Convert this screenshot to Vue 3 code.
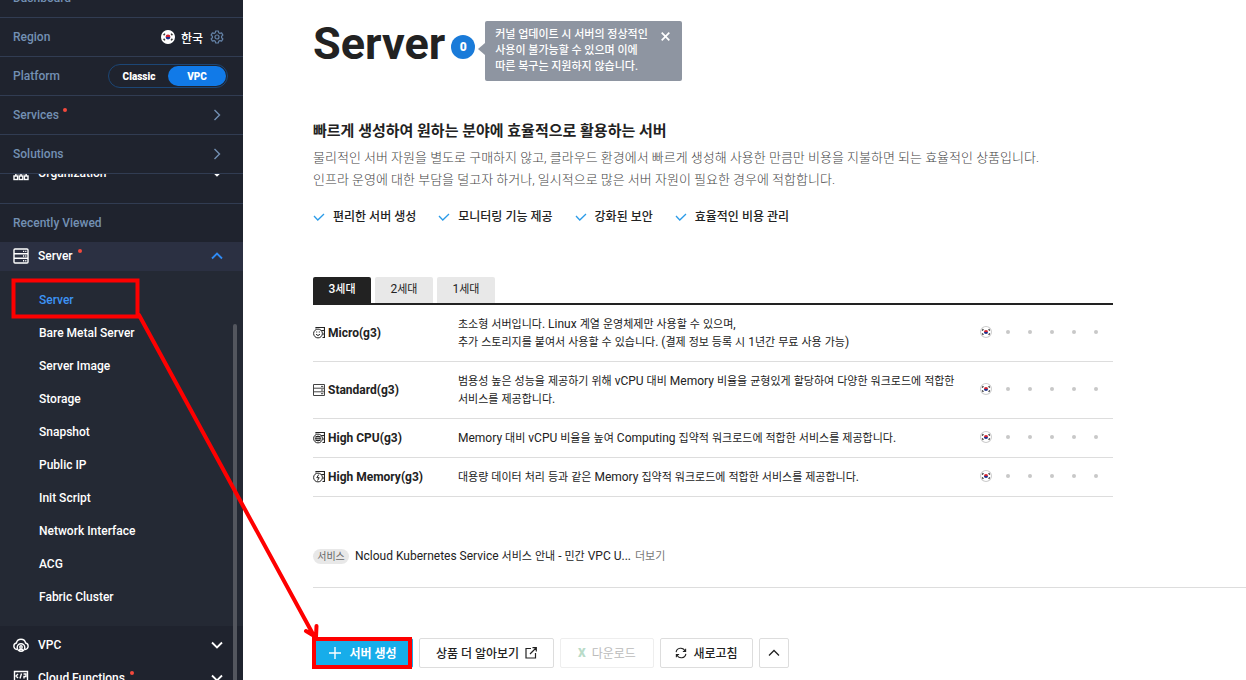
<script setup>
import { h, ref } from 'vue'

const subMenu = ['Server', 'Bare Metal Server', 'Server Image', 'Storage', 'Snapshot', 'Public IP', 'Init Script', 'Network Interface', 'ACG', 'Fabric Cluster']
const features = ['편리한 서버 생성', '모니터링 기능 제공', '강화된 보안', '효율적인 비용 관리']
const tabs = ['3세대', '2세대', '1세대']
const activeTab = ref('3세대')
const rows = [
  { icon: 'micro', name: 'Micro(g3)', lines: ['초소형 서버입니다. Linux 계열 운영체제만 사용할 수 있으며,', '추가 스토리지를 붙여서 사용할 수 있습니다. (결제 정보 등록 시 1년간 무료 사용 가능)'] },
  { icon: 'standard', name: 'Standard(g3)', lines: ['범용성 높은 성능을 제공하기 위해 vCPU 대비 Memory 비율을 균형있게 할당하여 다양한 워크로드에 적합한 서비스를 제공합니다.'] },
  { icon: 'cpu', name: 'High CPU(g3)', lines: ['Memory 대비 vCPU 비율을 높여 Computing 집약적 워크로드에 적합한 서비스를 제공합니다.'] },
  { icon: 'memory', name: 'High Memory(g3)', lines: ['대용량 데이터 처리 등과 같은 Memory 집약적 워크로드에 적합한 서비스를 제공합니다.'] },
]

// Sets Hangul one step smaller than the Latin text beside it.
const MixedText = ({ text }) =>
  text.split(/([가-힣]+)/).map((run, i) => (i % 2 ? h('small', run) : run))
MixedText.props = ['text']
</script>

<template>
  <svg class="defs" aria-hidden="true">
    <symbol id="korea" viewBox="0 0 14 14">
      <circle cx="7" cy="7" r="6.400" fill="#fff" stroke="currentColor" stroke-width="1.200" />
      <path d="M4.600 7a2.400 2.400 0 0 1 4.800 0z" fill="#d3222f" />
      <path d="M4.600 7a2.400 2.400 0 0 0 4.800 0z" fill="#21308c" />
      <path d="M2.600 5.300l1.300-1.700M10.100 3.600l1.300 1.700M2.600 8.700l1.300 1.700M10.100 10.400l1.300-1.700" stroke="#333" stroke-width="1.500" />
    </symbol>
    <symbol id="down" viewBox="0 0 12 8"><path d="M1 1.500l5 5 5-5" fill="none" stroke="currentColor" stroke-width="1.800" /></symbol>
    <symbol id="right" viewBox="0 0 8 12"><path d="M1.500 1l5 5-5 5" fill="none" stroke="currentColor" stroke-width="1.400" /></symbol>
    <symbol id="rack" viewBox="0 0 16 16">
      <g fill="none" stroke="currentColor" stroke-width="1.400">
        <rect x="1" y="1" width="14" height="14" rx="1" /><path d="M1 5.700h14M1 10.300h14" />
      </g>
      <path d="M10 3.400h3.400M10 8h3.400M10 12.700h3.400" stroke="currentColor" stroke-width="1.400" stroke-dasharray="1.200 1" />
    </symbol>
  </svg>

  <div class="page">
    <aside class="sidebar">
      <div class="fixed-menu">
        <div class="row"><a href="#">Dashboard</a></div>
        <div class="row">
          <span>Region</span>
          <span class="region">
            <svg class="flag-lg"><use href="#korea" /></svg>
            <span class="country">한국</span>
            <button class="bare" aria-label="Region settings">
              <svg width="14" height="14" viewBox="0 0 14 14" fill="none" stroke="#6482a6" stroke-width="1.200">
                <path d="M5.700 1h2.600l.4 1.700 1.200.7 1.700-.5 1.300 2.200L11.600 6.300v1.400l1.300 1.200-1.300 2.200-1.700-.5-1.200.7L8.300 13H5.700l-.4-1.700-1.200-.7-1.700.5-1.300-2.200 1.300-1.200V6.300L1.100 5.100l1.300-2.200 1.700.5 1.200-.7z" stroke-linejoin="round" />
                <circle cx="7" cy="7" r="2" />
              </svg>
            </button>
          </span>
        </div>
        <div class="row">
          <span>Platform</span>
          <span class="toggle">
            <button>Classic</button>
            <button class="on">VPC</button>
          </span>
        </div>
        <div class="row"><a href="#" class="label">Services<i class="dot"></i></a><svg class="chev-right"><use href="#right" /></svg></div>
        <div class="row"><a href="#">Solutions</a><svg class="chev-right"><use href="#right" /></svg></div>
      </div>

      <div class="scroll-menu">
        <a href="#" class="item organization">
          <svg class="item-icon" viewBox="0 0 16 16" fill="none" stroke="currentColor" stroke-width="1.400">
            <rect x="5.500" y="1" width="5" height="4" /><path d="M8 5v4M2.800 11V8.500h10.400V11M8 8v3" />
            <rect x="1" y="11" width="3.600" height="3.500" /><rect x="6.200" y="11" width="3.600" height="3.500" /><rect x="11.400" y="11" width="3.600" height="3.500" />
          </svg>
          <span>Organization</span><svg class="chev"><use href="#down" /></svg>
        </a>
        <h2>Recently Viewed</h2>
        <a href="#" class="item open">
          <svg class="item-icon"><use href="#rack" /></svg>
          <span class="label">Server<i class="dot"></i></span><svg class="chev up"><use href="#down" /></svg>
        </a>
        <ul>
          <li v-for="(s, i) in subMenu" :key="s"><a href="#" :class="{ current: i === 0 }">{{ s }}</a></li>
        </ul>
        <a href="#" class="item">
          <svg class="item-icon" viewBox="0 0 16 16" fill="none" stroke="currentColor" stroke-width="1.400">
            <path d="M4 12.500a3.300 3.300 0 0 1-.6-6.500 4.700 4.700 0 0 1 9.200 0 3.300 3.300 0 0 1-.6 6.500" />
            <circle cx="8" cy="10.500" r="3.800" /><circle cx="8" cy="10" r="1.200" /><path d="M6.500 14v-1.500h3V14" />
          </svg>
          <span>VPC</span><svg class="chev"><use href="#down" /></svg>
        </a>
        <a href="#" class="item">
          <svg class="item-icon" viewBox="0 0 16 16" fill="none" stroke="currentColor" stroke-width="1.400">
            <path d="M1.500 1.500h13v13h-13z" /><path d="M5 4L3 6l2 2M8.500 3.500l-1.500 5M10.500 4h2.500v2.500h-2v2M5 14v-2.500h5" />
          </svg>
          <span class="label">Cloud Functions<i class="dot"></i></span><svg class="chev"><use href="#down" /></svg>
        </a>
      </div>
      <div class="scrollbar"></div>
    </aside>

    <main>
      <header>
        <h1>Server</h1>
        <span class="count">0</span>
        <div class="tip">
          <p>커널 업데이트 시 서버의 정상적인<br />사용이 불가능할 수 있으며 이에<br />따른 복구는 지원하지 않습니다.</p>
          <button class="bare" aria-label="닫기">
            <svg width="9" height="9" viewBox="0 0 9 9" stroke="#fff" stroke-width="1.700"><path d="M.7.7l7.600 7.600M8.300.7L.7 8.300" /></svg>
          </button>
        </div>
      </header>

      <h3>빠르게 생성하여 원하는 분야에 효율적으로 활용하는 서버</h3>
      <p class="intro">물리적인 서버 자원을 별도로 구매하지 않고, 클라우드 환경에서 빠르게 생성해 사용한 만큼만 비용을 지불하면 되는 효율적인 상품입니다.<br />인프라 운영에 대한 부담을 덜고자 하거나, 일시적으로 많은 서버 자원이 필요한 경우에 적합합니다.</p>
      <ul class="features">
        <li v-for="f in features" :key="f">
          <svg width="12" height="8" viewBox="0 0 12 8" fill="none" stroke="#2b9be8" stroke-width="1.300"><path d="M1 3l3.800 4L11 1" /></svg>{{ f }}
        </li>
      </ul>

      <div class="tabs" role="tablist">
        <button v-for="t in tabs" :key="t" role="tab" :class="{ active: t === activeTab }" @click="activeTab = t"><MixedText :text="t" /></button>
      </div>
      <table>
        <tbody>
          <tr v-for="r in rows" :key="r.name">
            <th scope="row">
              <div class="name">
                <svg v-if="r.icon === 'standard'" class="type-icon" viewBox="0 0 12 12" fill="none" stroke="#444">
                  <path d="M.5.500h11v11H.5zM.5 4.200h11M.5 7.800h11M8 2.400h2.300M8 6h2.300M8 9.700h2.300" />
                </svg>
                <svg v-else class="type-icon" viewBox="0 0 12 12" fill="none" stroke="#222">
                  <path d="M3 1.500V.5h8.500v10H9.500M8 3.500h3.500M9.500 7h2" stroke-width="1.200" />
                  <circle cx="5" cy="6.500" r="4.400" fill="#fff" />
                  <template v-if="r.icon === 'micro'">
                    <path d="M3 7.300q2 2.400 4 0" /><path d="M3.200 5h1M5.800 5h1" stroke-width="1.200" />
                  </template>
                  <template v-else-if="r.icon === 'cpu'">
                    <rect x="3" y="4.500" width="4" height="4" /><path d="M5 3.300v6.400M1.800 6.500h6.400" stroke-width=".7" />
                  </template>
                  <path v-else d="M5.800 3.500L3.800 6.700h2.400L4.500 9.500" />
                </svg>
                {{ r.name }}
              </div>
            </th>
            <td><template v-for="(l, i) in r.lines" :key="l"><br v-if="i" /><MixedText :text="l" /></template></td>
            <td class="regions">
              <div>
                <span><svg class="flag-sm"><use href="#korea" /></svg></span>
                <span v-for="n in 5" :key="n"><i></i></span>
              </div>
            </td>
          </tr>
        </tbody>
      </table>

      <div class="notice">
        <span class="badge">서비스</span>
        <a href="#"><MixedText text="Ncloud Kubernetes Service 서비스 안내 - 민간 VPC U..." /></a>
        <a href="#" class="more"><MixedText text="더보기" /></a>
      </div>

      <div class="actions">
        <button class="primary">
          <svg width="12" height="12" viewBox="0 0 12 12" stroke="#fff" stroke-width="1.400"><path d="M6 0v12M0 6h12" /></svg><span>서버 생성</span>
        </button>
        <button class="learn"><span>상품 더 알아보기</span>
          <svg width="12" height="12" viewBox="0 0 12 12" fill="none" stroke="#222" stroke-width="1.200"><path d="M6 1.500H1v9.500h9.500V6M7.500.7h3.800v3.800M11 1L5 7" /></svg>
        </button>
        <button class="download" disabled><b>X</b><span>다운로드</span></button>
        <button class="refresh">
          <svg width="12" height="12" viewBox="0 0 13 12" fill="none" stroke="#222" stroke-width="1.200"><path d="M1.200 5a5 5 0 0 1 9.600-1M11.800 7a5 5 0 0 1-9.600 1M11.500 1.300V4.300H8.500M1.500 10.700V7.700h3" /></svg><span>새로고침</span>
        </button>
        <button class="collapse" aria-label="접기"><svg class="chev-thin" viewBox="0 0 12 8" fill="none" stroke="#222" stroke-width="1.300"><path d="M1 6.500l5-5 5 5" /></svg></button>
      </div>
    </main>

    <svg class="annotation" width="420" height="680" viewBox="0 0 420 680" fill="none" stroke="#fe0000" stroke-width="4" aria-hidden="true">
      <rect x="13.500" y="280.500" width="124" height="36" />
      <rect x="314" y="639" width="96" height="28" />
      <path d="M139 315L314 636M306 631L316 637L316.500 626" stroke-linecap="round" />
    </svg>
  </div>
</template>

<style>
body {
  margin: 0;
  overflow: hidden;
}
</style>

<style scoped>
.page, .page * { box-sizing: border-box; }
.page {
  position: relative;
  display: flex;
  height: 100vh;
  overflow: hidden;
  background: #fff;
  color: #222;
  font-family: Roboto, "Noto Sans CJK KR", sans-serif;
  font-size: 12px;
}
.page ul, .page p, .page h1, .page h2, .page h3 { margin: 0; padding: 0; list-style: none; }
.page :deep(small) { font-size: 11px; line-height: 0; }
a { color: inherit; text-decoration: none; }
button { font: inherit; color: inherit; cursor: pointer; padding: 0; }
svg { flex: none; }
.defs { position: absolute; width: 0; height: 0; }
.bare { display: flex; border: 0; background: none; }

.sidebar {
  position: relative;
  flex: none;
  display: flex;
  flex-direction: column;
  width: 243px;
  background: #1f232e;
  color: #fff;
}
.fixed-menu { flex: none; margin-top: -21px; }
.row {
  display: flex;
  align-items: center;
  justify-content: space-between;
  height: 39px;
  padding: 0 15px 0 13px;
  border-bottom: 1px solid #313c52;
  color: #7390b3;
  font-weight: 500;
}
.region { display: flex; align-items: center; padding-right: 4px; color: #fff; }
.country { margin: 0 7px 0 6px; }
.flag-lg { width: 14px; height: 14px; }
.toggle {
  display: flex;
  width: 120px;
  height: 24px;
  padding: 1px;
  border: 1px solid #1c4675;
  border-radius: 12px;
  color: #fff;
  font-size: 10px;
  font-weight: 900;
}
.toggle button { flex: 1; border: 0; border-radius: 10px; background: none; }
.toggle .on { background: #117ae8; }
.chev-right { width: 8px; height: 12px; margin-right: 7px; }
.label { display: flex; line-height: 14px; }
.dot {
  width: 4px;
  height: 4px;
  margin-left: 4px;
  border-radius: 50%;
  background: #f4483c;
}
.scroll-menu { flex: 1; min-height: 0; overflow: hidden; }
.item {
  display: flex;
  align-items: center;
  height: 33px;
  padding: 4px 20px 0 13px;
  font-weight: 500;
}
.item .dot { margin-left: 5px; }
.item-icon { width: 16px; height: 16px; margin-right: 9px; }
.item .chev { margin-left: auto; }
.chev { width: 12px; height: 8px; }
.organization { margin-top: -18px; padding-top: 0; }
.page .scroll-menu h2 {
  height: 39px;
  margin-top: 14px;
  padding-left: 13px;
  border-top: 1px solid #313c52;
  color: #7390b3;
  font-size: 12px;
  font-weight: 500;
  line-height: 38px;
}
.open { height: 29px; padding-top: 0; padding-bottom: 2px; background: #2b3042; }
.up { transform: rotate(180deg); color: #2f8bf5; }
.page .scroll-menu ul { padding: 13px 0 12px; background: #242934; }
.scroll-menu li { height: 33px; padding-left: 39px; font-weight: 500; line-height: 33px; }
.current { color: #3d93f5; }
.scrollbar { position: absolute; top: 324px; bottom: 0; right: 6px; width: 4px; border-radius: 2px 2px 0 0; background: #53565e; }

main { flex: 1; min-width: 0; padding: 21px 0 0 70px; }
header { display: flex; align-items: flex-start; height: 60px; }
h1 { font-size: 45px; font-weight: 700; line-height: 46px; }
.count {
  width: 24px;
  height: 24px;
  margin: 14px 0 0 6px;
  border-radius: 50%;
  background: #1a7bd9;
  color: #fff;
  font-weight: 900;
  line-height: 24px;
  text-align: center;
}
.tip {
  position: relative;
  display: flex;
  align-items: flex-start;
  justify-content: space-between;
  width: 197px;
  height: 60px;
  margin-left: 10px;
  padding: 6px 12px 0 10px;
  border-radius: 2px;
  background: #8e95a1;
  color: #fff;
  font-size: 11px;
  font-weight: 500;
  line-height: 16px;
  white-space: nowrap;
}
.tip::before {
  content: "";
  position: absolute;
  left: -7px;
  top: 22px;
  border: 6px solid transparent;
  border-left: 0;
  border-right: 7px solid #8e95a1;
}
.tip .bare { margin-top: 5px; }
.page h3 { margin-top: 39px; font-size: 15px; font-weight: 700; line-height: 22px; }
.page .intro { margin-top: 5px; color: #444; font-size: 13px; font-weight: 300; line-height: 22px; }
.features { display: flex; gap: 22px; line-height: 18px; }
.page .features { margin-top: 17px; font-weight: 500; }
.features li { display: flex; align-items: center; gap: 8px; }
.tabs { display: flex; gap: 4px; max-width: 800px; margin-top: 51px; border-bottom: 2px solid #222; }
.tabs button { width: 58px; height: 26px; padding-bottom: 2px; border: 0; border-radius: 2px 2px 0 0; background: #e8e8e8; }
.tabs .active { background: #222; color: #fff; font-weight: 500; }
table { width: 100%; max-width: 800px; border-collapse: separate; border-spacing: 0; table-layout: fixed; line-height: 18px; }
th, td { padding: 10px 0; border-bottom: 1px solid #ddd; text-align: left; font-weight: 400; word-break: keep-all; }
th { width: 145px; font-weight: 700; }
.name { display: flex; align-items: center; gap: 3px; }
.type-icon { width: 12px; height: 12px; }
.regions { width: 138px; padding: 9px 0 11px; }
.regions div { display: flex; }
.regions span { display: flex; align-items: center; justify-content: center; width: 22px; }
.regions i { width: 4px; height: 4px; border-radius: 50%; background: #c8c8c8; }
.flag-sm { width: 12px; height: 12px; color: #ccc; }
.notice { display: flex; align-items: center; gap: 6px; margin-top: 50px; padding-bottom: 22px; border-bottom: 1px solid #ddd; line-height: 18px; }
.badge { width: 36px; border-radius: 8px; background: #e8e8e8; color: #666; font-size: 10px; line-height: 15px; text-align: center; }
.more { color: #777; }
.notice .more { margin-left: -2px; }
.actions { display: flex; gap: 6px; margin-top: 50px; }
.actions button {
  display: flex;
  align-items: center;
  justify-content: center;
  gap: 6px;
  height: 30px;
  border: 1px solid #ddd;
  border-radius: 2px;
  background: #fff;
  font-weight: 500;
}
.actions span { padding-bottom: 2px; }
.actions .primary { width: 100px; gap: 8px; border-color: #17adea; background: #17adea; color: #fff; font-weight: 700; }
.learn { width: 135px; }
.actions .download { width: 94px; border-color: #eee; color: #bbb; font-weight: 400; }
.download b { color: #b9dbc8; font-weight: 900; }
.refresh { width: 93px; }
.collapse { width: 30px; }
.chev-thin { width: 12px; height: 8px; }
.annotation { position: absolute; left: 0; top: 0; pointer-events: none; }
</style>
